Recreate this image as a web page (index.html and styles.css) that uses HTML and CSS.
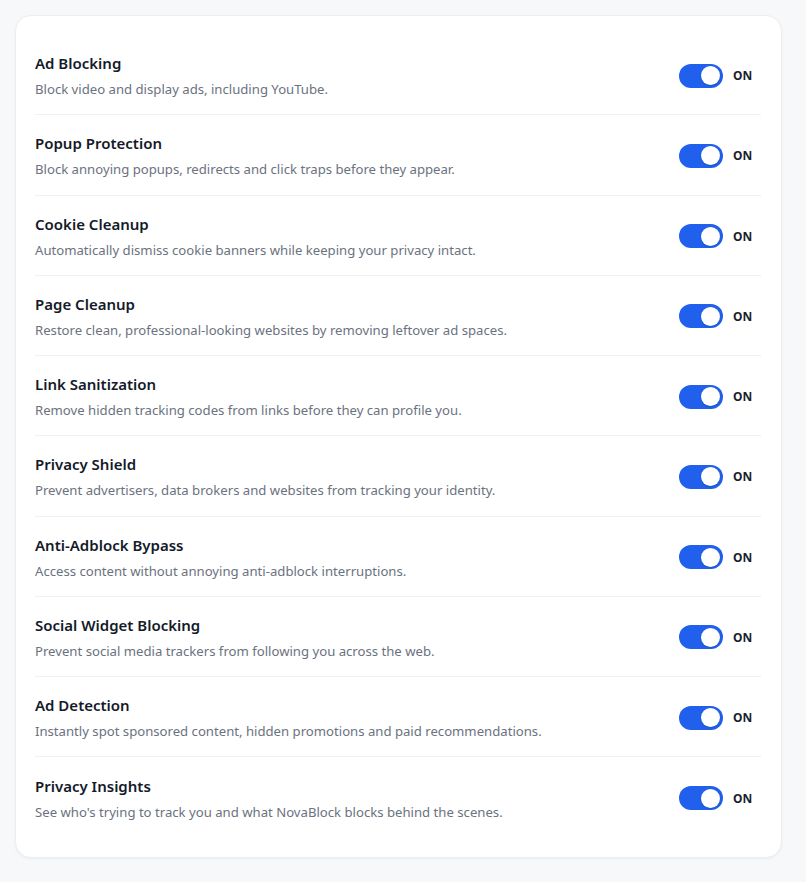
FILE: index.html
```html
<!DOCTYPE html>
<html lang="en">
<head>
<meta charset="utf-8">
<title>Settings</title>
<link rel="stylesheet" href="styles.css">
</head>
<body>
<main class="card">
  <div class="row">
    <div class="text"><div class="title">Ad Blocking</div><div class="desc">Block video and display ads, including YouTube.</div></div>
    <div class="ctl"><span class="switch"><span class="knob"></span></span><span class="state">ON</span></div>
  </div>
  <div class="row">
    <div class="text"><div class="title">Popup Protection</div><div class="desc">Block annoying popups, redirects and click traps before they appear.</div></div>
    <div class="ctl"><span class="switch"><span class="knob"></span></span><span class="state">ON</span></div>
  </div>
  <div class="row">
    <div class="text"><div class="title">Cookie Cleanup</div><div class="desc">Automatically dismiss cookie banners while keeping your privacy intact.</div></div>
    <div class="ctl"><span class="switch"><span class="knob"></span></span><span class="state">ON</span></div>
  </div>
  <div class="row">
    <div class="text"><div class="title">Page Cleanup</div><div class="desc">Restore clean, professional-looking websites by removing leftover ad spaces.</div></div>
    <div class="ctl"><span class="switch"><span class="knob"></span></span><span class="state">ON</span></div>
  </div>
  <div class="row">
    <div class="text"><div class="title">Link Sanitization</div><div class="desc">Remove hidden tracking codes from links before they can profile you.</div></div>
    <div class="ctl"><span class="switch"><span class="knob"></span></span><span class="state">ON</span></div>
  </div>
  <div class="row">
    <div class="text"><div class="title">Privacy Shield</div><div class="desc">Prevent advertisers, data brokers and websites from tracking your identity.</div></div>
    <div class="ctl"><span class="switch"><span class="knob"></span></span><span class="state">ON</span></div>
  </div>
  <div class="row">
    <div class="text"><div class="title">Anti-Adblock Bypass</div><div class="desc">Access content without annoying anti-adblock interruptions.</div></div>
    <div class="ctl"><span class="switch"><span class="knob"></span></span><span class="state">ON</span></div>
  </div>
  <div class="row">
    <div class="text"><div class="title">Social Widget Blocking</div><div class="desc">Prevent social media trackers from following you across the web.</div></div>
    <div class="ctl"><span class="switch"><span class="knob"></span></span><span class="state">ON</span></div>
  </div>
  <div class="row">
    <div class="text"><div class="title">Ad Detection</div><div class="desc">Instantly spot sponsored content, hidden promotions and paid recommendations.</div></div>
    <div class="ctl"><span class="switch"><span class="knob"></span></span><span class="state">ON</span></div>
  </div>
  <div class="row">
    <div class="text"><div class="title">Privacy Insights</div><div class="desc">See who's trying to track you and what NovaBlock blocks behind the scenes.</div></div>
    <div class="ctl"><span class="switch"><span class="knob"></span></span><span class="state">ON</span></div>
  </div>
</main>
</body>
</html>
```

FILE: styles.css
```css
* { box-sizing: border-box; }
html, body { margin: 0; padding: 0; }
body {
  background: #f7f8fa;
  font-family: "Noto Sans", "Open Sans", sans-serif;
  padding: 15px 24px 25px 15px;
}
.card {
  background: #ffffff;
  border: 1px solid #eceef1;
  border-radius: 16px;
  box-shadow: 0 1px 3px rgba(15, 23, 42, 0.05);
  padding: 19px 20px 19px 19px;
}
.row {
  display: flex;
  align-items: center;
  justify-content: space-between;
  height: 80.25px;
  border-bottom: 1px solid #f0f1f3;
}
.row:last-child { border-bottom: none; }
.text { display: flex; flex-direction: column; gap: 7px; padding-top: 2px; }
.title {
  font-size: 15px;
  font-weight: 600;
  color: #141a29;
  line-height: 20px;
}
.desc {
  font-size: 13.15px;
  color: #6b7280;
  line-height: 18px;
}
.ctl { display: flex; align-items: center; gap: 10px; padding-top: 2px; }
.switch {
  width: 44px;
  height: 24px;
  border-radius: 12px;
  background: #2160ec;
  display: flex;
  align-items: center;
  justify-content: flex-end;
  padding: 0 3px;
}
.knob {
  width: 19px;
  height: 19px;
  border-radius: 50%;
  background: #fff;
  box-shadow: 0 1px 2px rgba(0,0,0,0.15);
}
.state {
  width: 28px;
  font-size: 12px;
  font-weight: 700;
  color: #1a1f2e;
}
```
